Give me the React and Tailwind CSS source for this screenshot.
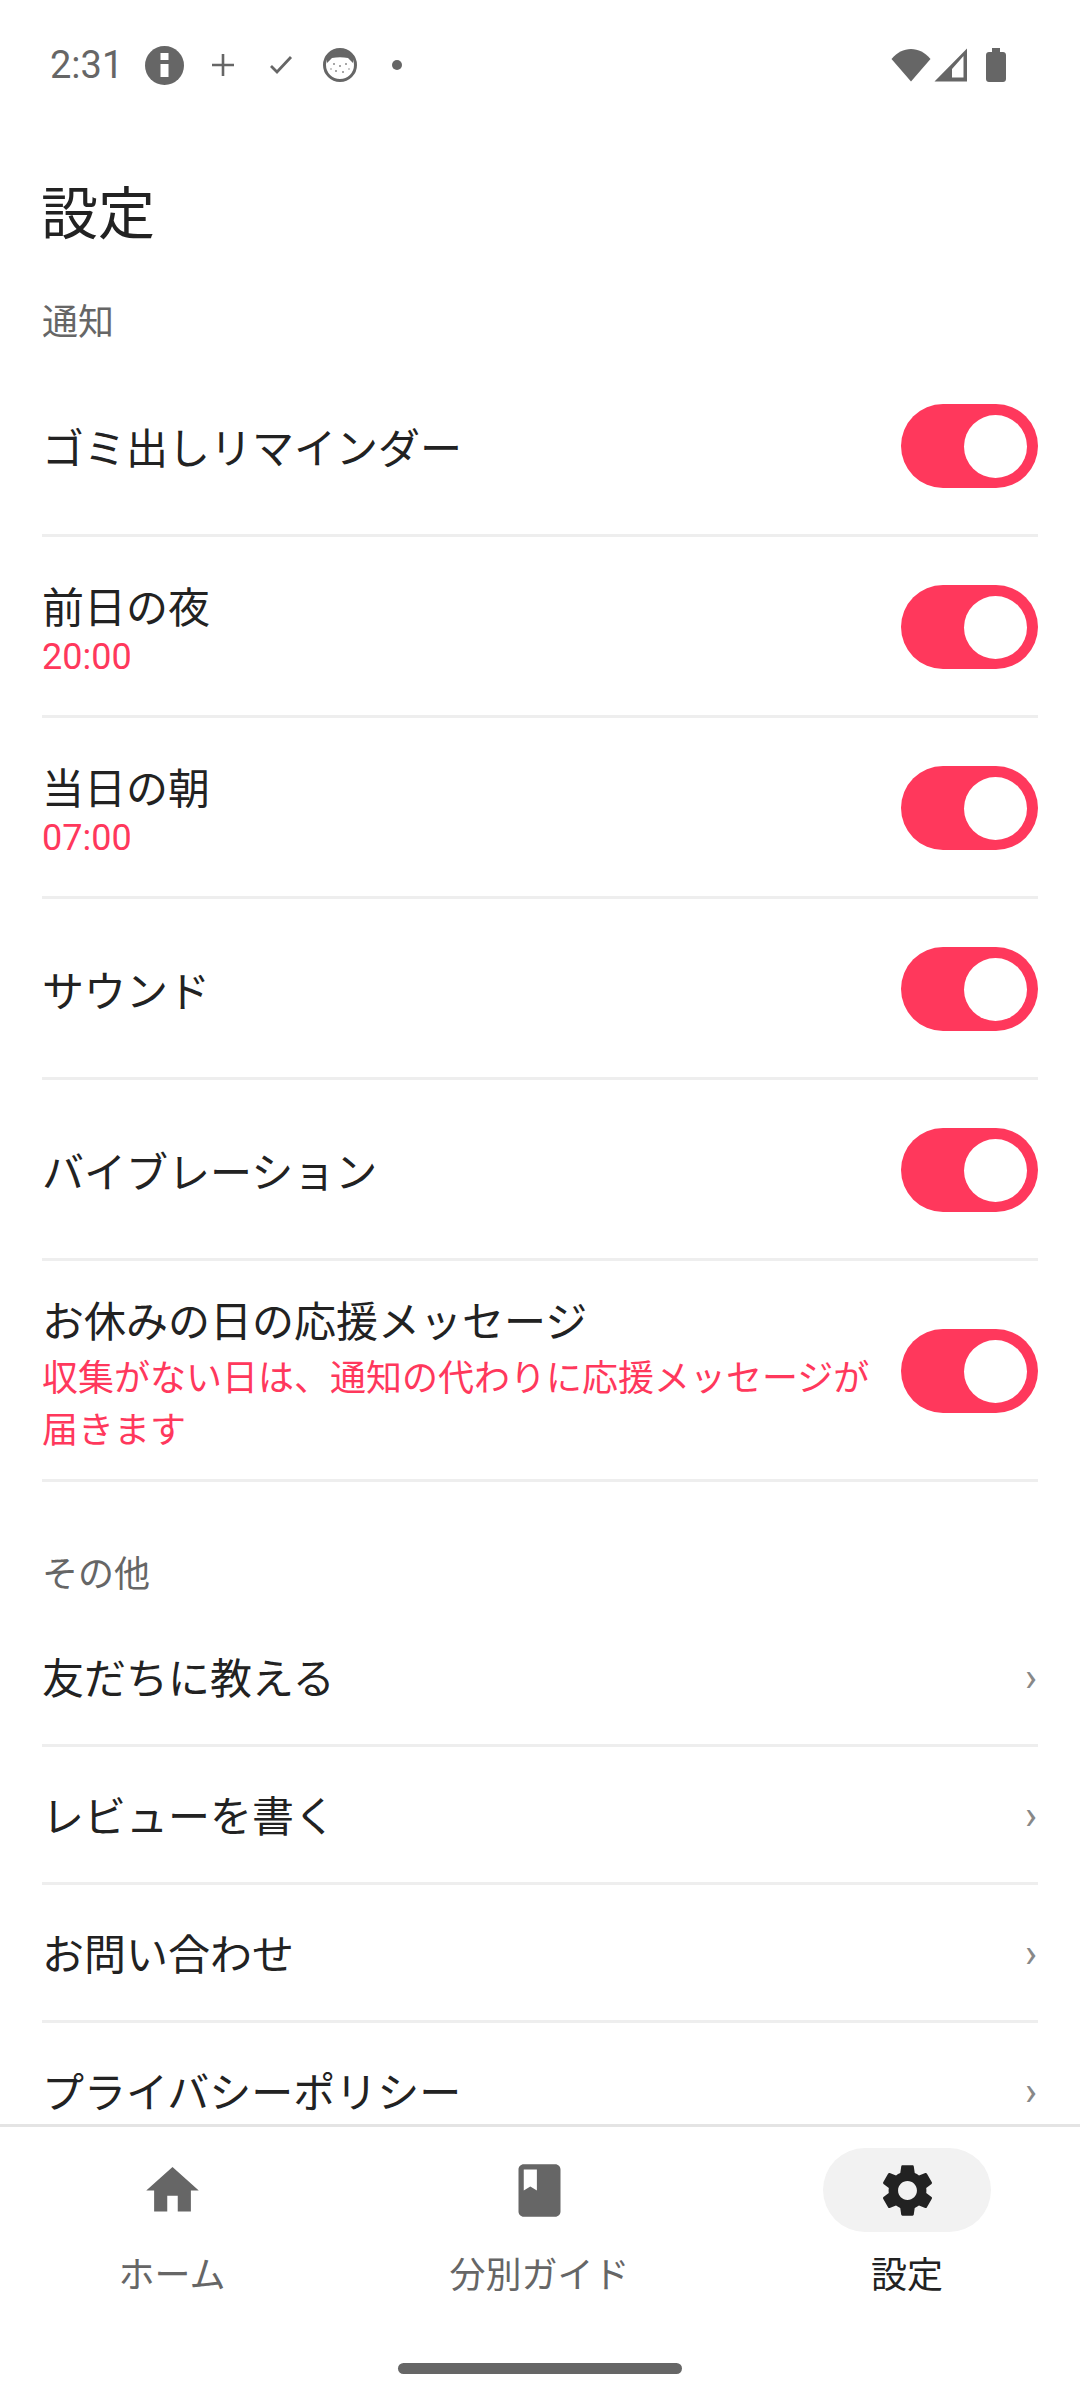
import React from 'react';

const jpFont = "font-['Roboto','Noto_Sans_CJK_JP',sans-serif]";

// Status bar icons are drawn at the pixel size they have in the picture
const StatusLeft = () => (
  <div className="flex items-center">
    <span className="w-[68px] text-[38px] leading-[44px] text-[#666666]">2:31</span>
    <svg className="ml-[27px]" width="39" height="39" viewBox="0 0 39 39">
      <ellipse cx="19.500" cy="19.500" rx="19.500" ry="19.500" fill="#666666" />
      <rect x="15.500" y="7" width="8" height="7" fill="#ffffff" />
      <rect x="15.500" y="18" width="8" height="13" fill="#ffffff" />
    </svg>
    <svg className="ml-[27px]" width="24" height="24" viewBox="0 0 24 24">
      <path d="M12 1v22M1 12h22" stroke="#666666" strokeWidth="2.6" fill="none" />
    </svg>
    <svg className="ml-[34px]" width="24" height="20" viewBox="0 0 24 20">
      <path d="M2 11l6 6L22 2" stroke="#666666" strokeWidth="2.8" fill="none" />
    </svg>
    <svg className="ml-[30px]" width="34" height="34" viewBox="0 0 34 34">
      <circle cx="17" cy="17" r="15.500" fill="#ffffff" stroke="#666666" strokeWidth="3" />
      <path d="M3 8 C8 1 26 1 31 8 L30 15 L25 10 C20 9 14 9 9 10 L4 15 Z" fill="#666666" />
      <g fill="#8a8a8a">
        <circle cx="11" cy="16" r="1" />
        <circle cx="17" cy="18" r="1" />
        <circle cx="23" cy="16" r="1" />
        <circle cx="13" cy="23" r="1" />
        <circle cx="20" cy="24" r="1" />
        <circle cx="8" cy="21" r="0.8" />
        <circle cx="26" cy="21" r="0.8" />
      </g>
    </svg>
    <span className="ml-[35px] h-[10px] w-[10px] rounded-full bg-[#666666]" />
  </div>
);

const StatusRight = () => (
  <div className="flex items-center">
    <svg width="40" height="34" viewBox="0 0 40 34">
      <path d="M0.500 11 C11 -2.500 29 -2.500 39.500 11 L20 33.500 Z" fill="#666666" />
    </svg>
    <svg className="ml-[3px]" width="34" height="34" viewBox="0 0 34 34">
      <path fill="#666666" fillRule="evenodd" d="M33 0.500V33.500H0.500ZM29.500 8L18 21V29.500H29.500Z" />
    </svg>
    <svg className="ml-[18px]" width="20" height="34" viewBox="0 0 20 34">
      <path d="M6 0h8v4h3c1.700 0 3 1.300 3 3v24c0 1.700-1.300 3-3 3H3c-1.700 0-3-1.300-3-3V7c0-1.700 1.300-3 3-3h3z" fill="#666666" />
    </svg>
  </div>
);

const Toggle = () => (
  <div className="flex h-[84px] w-[137px] shrink-0 items-center justify-end rounded-full bg-[#ff385c] pr-[11px]">
    <div className="h-[63px] w-[63px] rounded-full bg-white" />
  </div>
);

const SwitchRow = ({ title, sub, digits }) => (
  <div className="flex min-h-[181px] shrink-0 items-center border-b-[3px] border-[#eeeeee] pt-[24px] pb-[22px]">
    <div className={`min-w-0 flex-1 pr-[20px] ${digits ? '' : 'pt-[8px]'}`}>
      <div className="text-[42px] leading-[60px] text-[#222222]">{title}</div>
      {sub && (
        <div className={`text-[36px] text-[#ff385c] ${digits ? 'leading-[36px]' : 'leading-[52px]'}`}>{sub}</div>
      )}
    </div>
    <Toggle />
  </div>
);

const LinkRow = ({ title }) => (
  <div className="flex h-[138px] shrink-0 items-center justify-between border-b-[3px] border-[#eeeeee] pt-[6px]">
    <span className="text-[42px] leading-[60px] text-[#222222]">{title}</span>
    <span className="mr-px mb-[4px] text-[40px] leading-[44px] text-[#888888]">›</span>
  </div>
);

const NavItem = ({ label, active, children }) => (
  <div className="flex w-[168px] flex-col items-center">
    <div className={`flex h-[84px] w-[168px] items-center justify-center rounded-full ${active ? 'bg-[#f2f2f2]' : ''}`}>
      {children}
    </div>
    <span className={`mt-[20px] whitespace-nowrap text-[36px] leading-[48px] ${active ? 'text-[#222222]' : 'text-[#666666]'}`}>{label}</span>
  </div>
);

const App = () => {
  const alerts = [
    { title: 'ゴミ出しリマインダー' },
    { title: '前日の夜', sub: '20:00', digits: true },
    { title: '当日の朝', sub: '07:00', digits: true },
    { title: 'サウンド' },
    { title: 'バイブレーション' },
    { title: 'お休みの日の応援メッセージ', sub: '収集がない日は、通知の代わりに応援メッセージが届きます' },
  ];
  const others = ['友だちに教える', 'レビューを書く', 'お問い合わせ', 'プライバシーポリシー'];

  return (
    <div className={`flex h-[2400px] w-[1080px] flex-col overflow-hidden bg-white ${jpFont}`} lang="ja">
      <div className="flex h-[130px] shrink-0 items-center justify-between pr-[74px] pl-[50px]">
        <StatusLeft />
        <StatusRight />
      </div>

      <div className="flex min-h-0 flex-1 flex-col overflow-hidden px-[42px]">
        <h1 className="-ml-px shrink-0 pt-[53px] text-[57px] leading-[64px] font-normal text-[#222222]">設定</h1>
        <div className="mt-[52px] mb-[9px] shrink-0 text-[36px] leading-[48px] text-[#666666]">通知</div>
        {alerts.map((row) => (
          <SwitchRow key={row.title} {...row} />
        ))}
        <div className="mt-[69px] mb-[10px] shrink-0 text-[36px] leading-[48px] text-[#666666]">その他</div>
        {others.map((title) => (
          <LinkRow key={title} title={title} />
        ))}
      </div>

      <div className="h-[276px] shrink-0 border-t-[3px] border-[#e4e4e4]">
        <div className="flex justify-between pt-[21px] pr-[89px] pl-[88px]">
          <NavItem label="ホーム">
            <svg width="63" height="63" viewBox="0 0 24 24" fill="#666666">
              <path d="M10 20v-6h4v6h5v-8h3L12 3 2 12h3v8z" />
            </svg>
          </NavItem>
          <NavItem label="分別ガイド">
            <svg width="63" height="63" viewBox="0 0 24 24" fill="#666666">
              <path d="M18 2H6c-1.100 0-2 .9-2 2v16c0 1.100.9 2 2 2h12c1.100 0 2-.9 2-2V4c0-1.100-.9-2-2-2zM6 4h5v8l-2.500-1.500L6 12V4z" />
            </svg>
          </NavItem>
          <NavItem label="設定" active>
            <svg width="63" height="63" viewBox="0 0 24 24" fill="#222222">
              <path d="M19.140 12.940c.04-.3.06-.61.06-.94 0-.32-.02-.64-.07-.94l2.030-1.580c.18-.14.23-.41.12-.61l-1.920-3.320c-.12-.22-.37-.29-.59-.22l-2.390.96c-.5-.38-1.030-.7-1.620-.94l-.36-2.540c-.04-.24-.24-.41-.48-.41h-3.840c-.24 0-.43.17-.47.41l-.36 2.540c-.59.24-1.130.57-1.620.94l-2.390-.96c-.22-.08-.47 0-.59.22L2.740 8.870c-.12.21-.08.47.12.61l2.030 1.580c-.05.3-.09.63-.09.94s.02.64.07.94l-2.030 1.580c-.18.14-.23.41-.12.61l1.920 3.320c.12.22.37.29.59.22l2.390-.96c.5.38 1.030.7 1.620.94l.36 2.540c.05.24.24.41.48.41h3.840c.24 0 .44-.17.47-.41l.36-2.540c.59-.24 1.130-.56 1.620-.94l2.390.96c.22.08.47 0 .59-.22l1.920-3.320c.12-.22.07-.47-.12-.61l-2.010-1.580zM12 15.600c-1.980 0-3.600-1.620-3.600-3.600s1.620-3.600 3.600-3.600 3.600 1.620 3.600 3.600-1.620 3.600-3.600 3.600z" />
            </svg>
          </NavItem>
        </div>
        <div className="mx-auto mt-[63px] h-[11px] w-[284px] rounded-full bg-[#666666]" />
      </div>
    </div>
  );
};

export default App;
